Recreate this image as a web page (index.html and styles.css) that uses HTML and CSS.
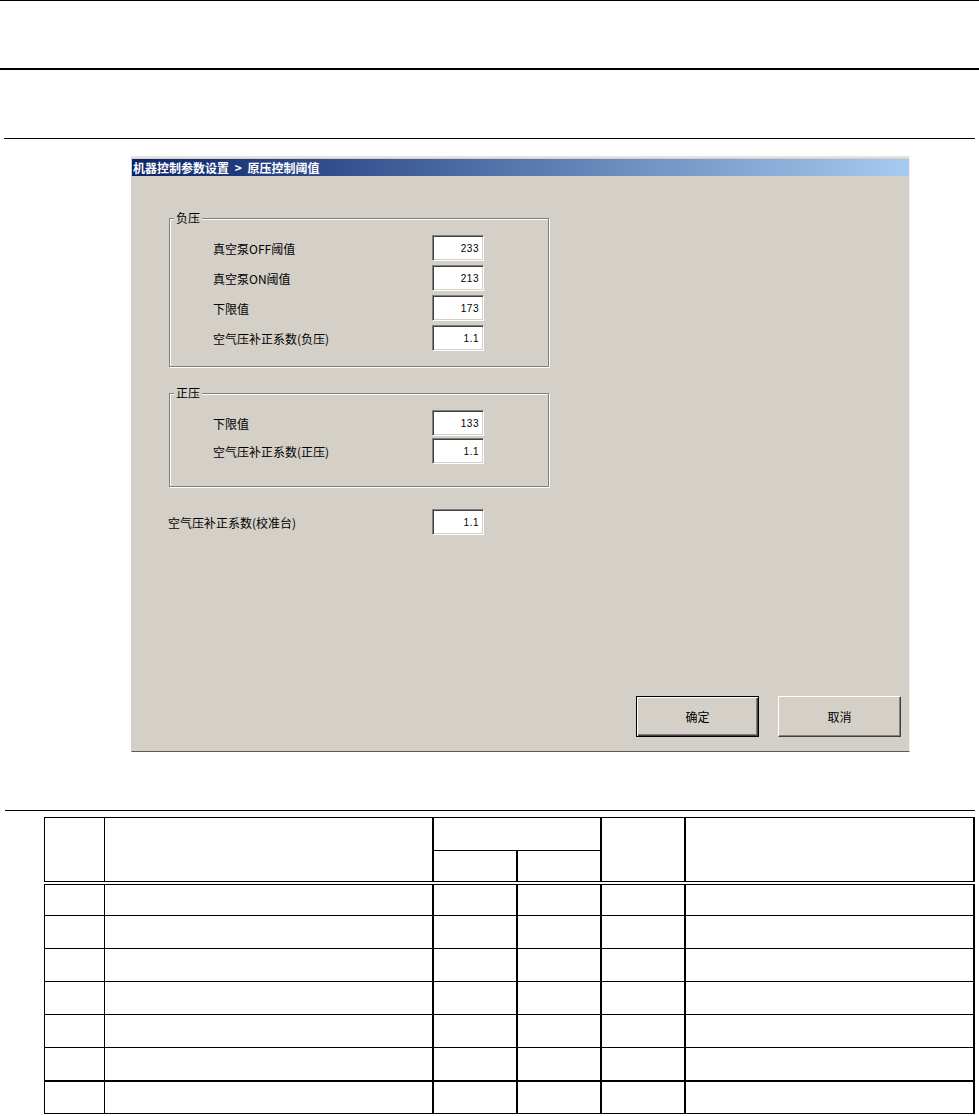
FILE: index.html
```html
<!DOCTYPE html>
<html lang="zh-CN">
<head>
    <meta charset="UTF-8">
    <title>机器控制参数设置 &gt; 原压控制阈值</title>
    <link rel="stylesheet" href="styles.css">
</head>
<body>
    <div class="page">
        <hr class="rule rule-top">
        <hr class="rule rule-heavy">
        <hr class="rule rule-light">

        <div class="dialog">
            <div class="titlebar">机器控制参数设置 &gt; 原压控制阈值</div>

            <div class="dialog-body">
                <fieldset class="group group-neg">
                    <legend>负压</legend>
                    <div class="field-row">
                        <label>真空泵OFF阈值</label>
                        <input class="num" type="text" value="233">
                    </div>
                    <div class="field-row">
                        <label>真空泵ON阈值</label>
                        <input class="num" type="text" value="213">
                    </div>
                    <div class="field-row">
                        <label>下限值</label>
                        <input class="num" type="text" value="173">
                    </div>
                    <div class="field-row">
                        <label>空气压补正系数(负压)</label>
                        <input class="num" type="text" value="1.1">
                    </div>
                </fieldset>

                <fieldset class="group group-pos">
                    <legend>正压</legend>
                    <div class="field-row">
                        <label>下限值</label>
                        <input class="num" type="text" value="133">
                    </div>
                    <div class="field-row">
                        <label>空气压补正系数(正压)</label>
                        <input class="num" type="text" value="1.1">
                    </div>
                </fieldset>

                <div class="field-row field-free">
                    <label>空气压补正系数(校准台)</label>
                    <input class="num" type="text" value="1.1">
                </div>

                <div class="dialog-buttons">
                    <button class="btn btn-default">确定</button>
                    <button class="btn">取消</button>
                </div>
            </div>
        </div>

        <hr class="rule rule-light rule-sep">

        <table class="spec">
            <colgroup>
                <col style="width: 60px">
                <col style="width: 328px">
                <col style="width: 84px">
                <col style="width: 84px">
                <col style="width: 84px">
                <col style="width: 289px">
            </colgroup>
            <thead>
                <tr class="head-top">
                    <th rowspan="2"></th>
                    <th rowspan="2"></th>
                    <th colspan="2" class="thick-l pair"></th>
                    <th rowspan="2" class="thick-l"></th>
                    <th rowspan="2" class="thick-l thick-r"></th>
                </tr>
                <tr class="head-sub">
                    <th class="thick-l"></th>
                    <th class="thick-l"></th>
                </tr>
            </thead>
            <tbody>
                <tr><td></td><td></td><td class="thick-l"></td><td class="thick-l"></td><td class="thick-l"></td><td class="thick-l thick-r"></td></tr>
                <tr><td></td><td></td><td class="thick-l"></td><td class="thick-l"></td><td class="thick-l"></td><td class="thick-l thick-r"></td></tr>
                <tr><td></td><td></td><td class="thick-l"></td><td class="thick-l"></td><td class="thick-l"></td><td class="thick-l thick-r"></td></tr>
                <tr><td></td><td></td><td class="thick-l"></td><td class="thick-l"></td><td class="thick-l"></td><td class="thick-l thick-r"></td></tr>
                <tr><td></td><td></td><td class="thick-l"></td><td class="thick-l"></td><td class="thick-l"></td><td class="thick-l thick-r"></td></tr>
                <tr><td></td><td></td><td class="thick-l"></td><td class="thick-l"></td><td class="thick-l"></td><td class="thick-l thick-r"></td></tr>
                <tr class="row-last"><td></td><td></td><td class="thick-l"></td><td class="thick-l"></td><td class="thick-l"></td><td class="thick-l thick-r"></td></tr>
            </tbody>
        </table>
    </div>
</body>
</html>
```

FILE: styles.css
```css
* {
    box-sizing: border-box;
}

body {
    margin: 0;
    background: #fff;
    font-family: "Noto Sans CJK SC", "Liberation Sans", sans-serif;
    font-size: 12px;
    color: #000;
}

.page {
    width: 979px;
    display: flex;
    flex-direction: column;
}

/* page rules */
.rule {
    border: 0;
    margin: 0;
    background: #000;
}

.rule-top {
    height: 1px;
}

.rule-heavy {
    height: 2px;
    margin-top: 67px;
}

.rule-light {
    height: 1px;
    margin: 68px 4px 0 4px;
}

.rule-sep {
    margin: 58px 4px 0 5px;
}

/* dialog */
.dialog {
    width: 779px;
    height: 596px;
    margin: 17px 0 0 131px;
    background: #d4d0c8;
    border-top: 2px solid #e6e3dc;
    border-left: 1px solid #d4d0c8;
    border-right: 1px solid #f2f1ee;
    border-bottom: 1px solid #5a5a5a;
    display: flex;
    flex-direction: column;
}

.titlebar {
    height: 17px;
    margin-top: 1px;
    padding-left: 1px;
    background: linear-gradient(to right, #0a246a, #a6caf0);
    color: #fff;
    font-weight: bold;
    font-size: 12px;
    line-height: 17px;
    word-spacing: 3px;
    white-space: nowrap;
}

.dialog-body {
    flex: 1;
    display: flex;
    flex-direction: column;
    align-items: flex-start;
    padding: 35px 8px 14px 37px;
}

.group {
    width: 380px;
    margin: 0;
    padding: 10px 0 15px 43px;
    border: 1px solid #808080;
    box-shadow: 1px 1px 0 #fff, inset 1px 1px 0 #fff;
    display: flex;
    flex-direction: column;
    gap: 4px;
}

.group legend {
    margin-left: -39px;
    padding: 0 2px;
    line-height: 14px;
    background: #d4d0c8;
}

.group-pos {
    margin-top: 19px;
    padding-bottom: 22px;
    gap: 2px;
}

.field-row {
    display: flex;
    align-items: center;
    height: 26px;
}

.field-row label {
    width: 219px;
    white-space: nowrap;
}

.field-free {
    margin: 22px 0 0 -1px;
}

.field-free label {
    width: 264px;
}

.num {
    width: 52px;
    height: 26px;
    margin: 0;
    padding: 0 4px 0 0;
    background: #fff;
    border: 1px solid;
    border-color: #808080 #fff #fff #808080;
    box-shadow: inset 1px 1px 0 #404040, inset -1px -1px 0 #d4d0c8;
    text-align: right;
    font-family: "Liberation Sans", sans-serif;
    font-size: 10px;
    letter-spacing: 0.5px;
    color: #000;
}

.dialog-buttons {
    margin-top: auto;
    align-self: flex-end;
    display: flex;
    gap: 19px;
}

.btn {
    width: 123px;
    height: 41px;
    padding: 0;
    background: #d4d0c8;
    border: 1px solid;
    border-color: #fff #404040 #404040 #fff;
    box-shadow: inset -1px -1px 0 #808080;
    font-family: "Noto Sans CJK SC", sans-serif;
    font-size: 12px;
    color: #000;
}

.btn-default {
    border-color: #000;
    box-shadow: inset 1px 1px 0 #fff, inset -1px -1px 0 #404040, inset -2px -2px 0 #808080;
}

/* blank spec table */
.spec {
    width: 929px;
    margin: 6px 0 0 44px;
    border-collapse: collapse;
    table-layout: fixed;
}

.spec th,
.spec td {
    border: 1px solid #000;
    padding: 0;
}

.spec .thick-l {
    border-left-width: 2px;
}

.spec .thick-r {
    border-right-width: 2px;
}

.head-top {
    height: 33px;
}

.head-sub {
    height: 32px;
}

.spec thead th {
    border-bottom: 4px double #000;
}

.spec thead th.pair {
    border-bottom: 1px solid #000;
}

.spec tbody tr {
    height: 33px;
}

.spec .row-last td {
    border-top: 2px solid #000;
}
```
